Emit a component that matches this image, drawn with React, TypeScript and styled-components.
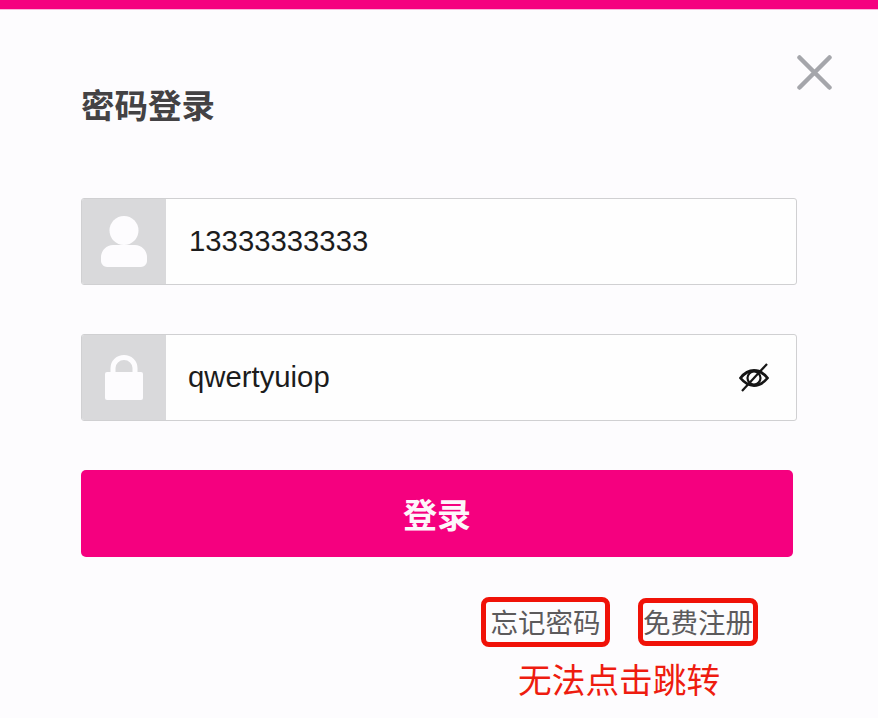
import React from "react";
import styled, { createGlobalStyle } from "styled-components";

const GlobalStyle = createGlobalStyle`
  html, body {
    margin: 0;
    padding: 0;
    background: #fdfcfe;
  }
  body {
    font-family: "Liberation Sans", "Noto Sans CJK SC", sans-serif;
  }
`;

const Page = styled.div`
  width: 878px;
  height: 718px;
  position: relative;
  overflow: hidden;
  box-sizing: border-box;
  background: #fdfcfe;
`;

const TopBar = styled.div`
  height: 9px;
  background: #f5007f;
  border-bottom: 1px solid #fbb4da;
  box-sizing: content-box;
`;

const Panel = styled.div`
  padding: 0 81px;
  display: flex;
  flex-direction: column;
`;

const Header = styled.div`
  display: flex;
  justify-content: space-between;
  height: 188px;
`;

const Title = styled.h1`
  margin: 77px 0 0;
  font-size: 33.500px;
  line-height: 40px;
  font-weight: 700;
  color: #444244;
  font-family: "Liberation Sans", "Noto Sans CJK SC", sans-serif;
`;

const CloseButton = styled.button`
  position: absolute;
  top: 55px;
  left: 797px;
  width: 35px;
  height: 35px;
  padding: 0;
  border: none;
  background: transparent;
  display: flex;
`;

const Field = styled.div`
  display: flex;
  width: 716px;
  height: 87px;
  margin-bottom: 49px;
  box-sizing: border-box;
  border: 1px solid #d0d0d2;
  border-radius: 3px;
  background: #fefefe;
  overflow: hidden;
`;

const Addon = styled.div`
  flex: 0 0 85px;
  margin: -1px 0 -1px -1px;
  background: #d9d9db;
  display: flex;
  align-items: center;
  justify-content: center;
`;

const Value = styled.div`
  flex: 1;
  display: flex;
  align-items: center;
  padding-left: ${(p: { $indent: number }) => p.$indent}px;
  padding-bottom: 2px;
  font-size: 29.300px;
  color: #1c1c1c;
`;

const EyeSlot = styled.div`
  display: flex;
  align-items: center;
  padding-right: 27px;
`;

const LoginButton = styled.button`
  width: 712px;
  height: 87px;
  border: none;
  border-radius: 5px;
  background: #f5007f;
  color: #fdf6fa;
  font-family: "Liberation Sans", "Noto Sans CJK SC", sans-serif;
  font-size: 34px;
  font-weight: 700;
  padding: 0;
`;

const Links = styled.div`
  display: flex;
  align-items: center;
  margin-top: 40px;
  margin-left: 400px;
  gap: 28px;
`;

const LinkBox = styled.a`
  box-sizing: border-box;
  display: flex;
  align-items: center;
  justify-content: center;
  width: ${(p: { $width: number; $height: number }) => p.$width}px;
  height: ${(p) => p.$height}px;
  padding-bottom: 3px;
  border: 5px solid #f01208;
  border-radius: 8px;
  font-size: 27.500px;
  color: #5c5a5c;
  white-space: nowrap;
`;

const Note = styled.div`
  margin: 13px 0 0 437px;
  font-size: 33.700px;
  line-height: 42px;
  color: #ee1c10;
  white-space: nowrap;
`;

const UserIcon = () => (
  <svg width="46" height="51" viewBox="0 0 46 51">
    <circle cx="23" cy="14.500" r="14.500" fill="#fdfcfe" />
    <path
      d="M12 29h22c7 0 12 6 12 12v4c0 3-3 6-6 6H6c-3 0-6-3-6-6v-4c0-6 5-12 12-12z"
      fill="#fdfcfe"
    />
  </svg>
);

const LockIcon = () => (
  <svg width="38" height="45" viewBox="0 0 38 45">
    <path
      d="M8 20v-7a11 10.500 0 0 1 22 0v7"
      fill="none"
      stroke="#fdfcfe"
      strokeWidth="5"
    />
    <rect x="0" y="17" width="38" height="28" rx="2" fill="#fdfcfe" />
  </svg>
);

const EyeIcon = () => (
  <svg width="30" height="30" viewBox="0 0 30 30">
    <path
      d="M1.500 15c4-5 9-7.500 13.500-7.500S24.500 10 28.500 15c-4 5-9 7.500-13.500 7.500S5.500 20 1.500 15z"
      fill="none"
      stroke="#161616"
      strokeWidth="2.800"
    />
    <circle cx="15" cy="15" r="6.500" fill="none" stroke="#161616" strokeWidth="2.200" />
    <path d="M3 28L28 1" stroke="#161616" strokeWidth="2.200" />
  </svg>
);

const CloseIcon = () => (
  <svg width="35" height="35" viewBox="0 0 35 35">
    <path
      d="M2.500 2.500l30 30M32.500 2.500l-30 30"
      stroke="#a5a6ab"
      strokeWidth="4.500"
      strokeLinecap="round"
    />
  </svg>
);

const App = () => {
  return (
    <Page>
      <GlobalStyle />
      <TopBar />
      <CloseButton>
        <CloseIcon />
      </CloseButton>
      <Panel>
        <Header>
          <Title>密码登录</Title>
        </Header>
        <Field>
          <Addon>
            <UserIcon />
          </Addon>
          <Value $indent={23}>13333333333</Value>
        </Field>
        <Field>
          <Addon>
            <LockIcon />
          </Addon>
          <Value $indent={22}>qwertyuiop</Value>
          <EyeSlot>
            <EyeIcon />
          </EyeSlot>
        </Field>
        <LoginButton>登录</LoginButton>
        <Links>
          <LinkBox $width={129} $height={50}>
            忘记密码
          </LinkBox>
          <LinkBox $width={120} $height={48}>
            免费注册
          </LinkBox>
        </Links>
        <Note>无法点击跳转</Note>
      </Panel>
    </Page>
  );
};

export default App;
